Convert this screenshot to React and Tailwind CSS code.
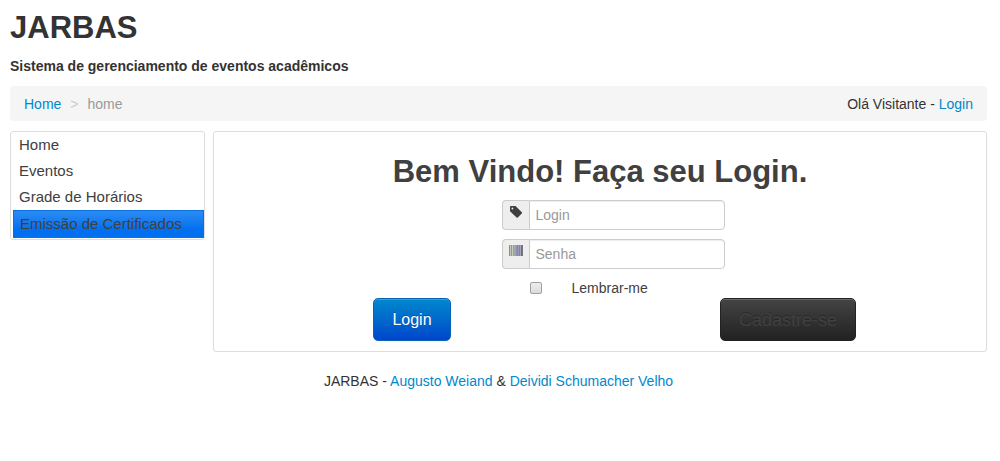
import React from "react";

const menuItems = ["Home", "Eventos", "Grade de Horários"];

const linkClass = "text-[#0088cc] hover:underline";

function TagIcon() {
  return (
    <svg width="14" height="14" viewBox="0 0 14 14" aria-hidden="true">
      <path
        fillRule="evenodd"
        fill="#404040"
        d="M1 1.8Q1 1 1.8 1H6.5L12.8 7.3Q13.4 7.9 12.8 8.5L8.8 12.5Q8.2 13.1 7.6 12.5L1 6.2ZM3.4 2.6A.9.9 0 1 0 3.4 4.4A.9.9 0 1 0 3.4 2.6Z"
      />
    </svg>
  );
}

function BarcodeIcon() {
  const bars = ["#8d8a90", "#c6c2b8", "#7ba0ac", "#d3c9a8", "#a49aa2", "#8fb0c4", "#a9a09a", "#9a8fa8", "#8687a8", "#9a9cc0", "#8480a0", "#a8a4b8", "#6f6f8c", "#77757f"];
  return (
    <svg width="14" height="14" viewBox="0 0 14 14" aria-hidden="true" shapeRendering="crispEdges">
      {bars.map((color, i) => (
        <rect key={i} x={i} y="1" width="1" height="11" fill={color} />
      ))}
    </svg>
  );
}

function Field({ id, type, label, icon }) {
  return (
    <div className="flex h-[30px]">
      <label
        htmlFor={id}
        className="flex w-[27px] shrink-0 justify-center rounded-l border border-r-0 border-[#ccc] bg-[#eee] pt-1"
      >
        {icon}
      </label>
      <input
        id={id}
        type={type}
        aria-label={label}
        placeholder={label}
        className="min-w-0 flex-1 rounded-r border border-[#ccc] bg-white px-[6px] text-sm text-[#555] shadow-[inset_0_1px_1px_rgba(0,0,0,0.075)] outline-none placeholder:text-[#999] focus:border-[#52a8ec]"
      />
    </div>
  );
}

export default function App() {
  return (
    <div className="bg-white pr-[13px] pl-[10px] font-['Liberation_Sans',Arial,sans-serif] text-sm leading-5 text-[#333]">
      <header>
        <h1 className="pt-2 text-[31px] leading-[40px] font-bold">JARBAS</h1>
        <p className="pt-2 pb-[10px] font-bold">Sistema de gerenciamento de eventos acadêmicos</p>
      </header>

      <nav className="flex items-center justify-between rounded bg-[#f5f5f5] px-[14px] pt-2 pb-[7px]">
        <ol className="flex gap-[9px]">
          <li><a href="#home" className={linkClass}>Home</a></li>
          <li aria-hidden="true" className="text-[#ccc]">&gt;</li>
          <li className="text-[#999]">home</li>
        </ol>
        <p>Olá Visitante - <a href="#login" className={linkClass}>Login</a></p>
      </nav>

      <div className="flex items-start gap-2 pt-[10px] text-[#404040]">
        <ul className="w-[195px] shrink-0 rounded-[3px] border border-[#ddd] pb-px pl-[2px] text-[15px] leading-[26px]">
          {menuItems.map((item) => (
            <li key={item}>
              <a href="#menu" className="block px-[6px]">{item}</a>
            </li>
          ))}
          <li>
            <a
              href="#certificados"
              className="block border border-[#0a6fe0] bg-linear-to-b from-[#2a8bf2] to-[#0070f0] to-70% px-[6px]"
            >
              Emissão de Certificados
            </a>
          </li>
        </ul>

        <main className="min-w-0 flex-1 rounded-[3px] border border-[#ddd] px-[10px] pt-5 pb-[10px]">
          <h2 className="text-center text-[31px] leading-[40px] font-bold">Bem Vindo! Faça seu Login.</h2>
          <form className="pt-2" onSubmit={(e) => e.preventDefault()}>
            <div className="flex justify-center pl-[26px]">
              <div className="flex w-[223px] flex-col gap-[9px]">
                <Field id="login" type="text" label="Login" icon={<TagIcon />} />
                <Field id="senha" type="password" label="Senha" icon={<BarcodeIcon />} />
                <div className="flex items-center gap-[30px] pl-7">
                  <input
                    id="lembrar"
                    type="checkbox"
                    className="size-3 appearance-none rounded-[2px] border border-[#a0a0a0] bg-linear-to-b from-[#eee] to-[#dcdcdc] checked:bg-[#0088cc] checked:bg-none"
                  />
                  <label htmlFor="lembrar">Lembrar-me</label>
                </div>
              </div>
            </div>
            <div className="grid grid-cols-2 justify-items-center">
              <button
                type="submit"
                className="h-[43px] rounded-[5px] border border-[#0a62b4] bg-linear-to-b from-[#0088cc] to-[#0044cc] px-[18px] text-[16px] text-white shadow-[inset_0_1px_0_rgba(255,255,255,0.2)] text-shadow-[0_-1px_0_rgba(0,0,0,0.25)]"
              >
                Login
              </button>
              <button
                type="button"
                className="h-[43px] rounded-[5px] border border-[#222] bg-linear-to-b from-[#444] to-[#222] px-[18px] text-[18px] text-[#404040] shadow-[inset_0_1px_0_rgba(255,255,255,0.2)] text-shadow-[0_-1px_0_rgba(0,0,0,0.25)]"
              >
                Cadastre-se
              </button>
            </div>
          </form>
        </main>
      </div>

      <footer className="pt-[19px] text-center">
        JARBAS - <a href="#augusto" className={linkClass}>Augusto Weiand</a> &amp;{" "}
        <a href="#deividi" className={linkClass}>Deividi Schumacher Velho</a>
      </footer>
    </div>
  );
}
